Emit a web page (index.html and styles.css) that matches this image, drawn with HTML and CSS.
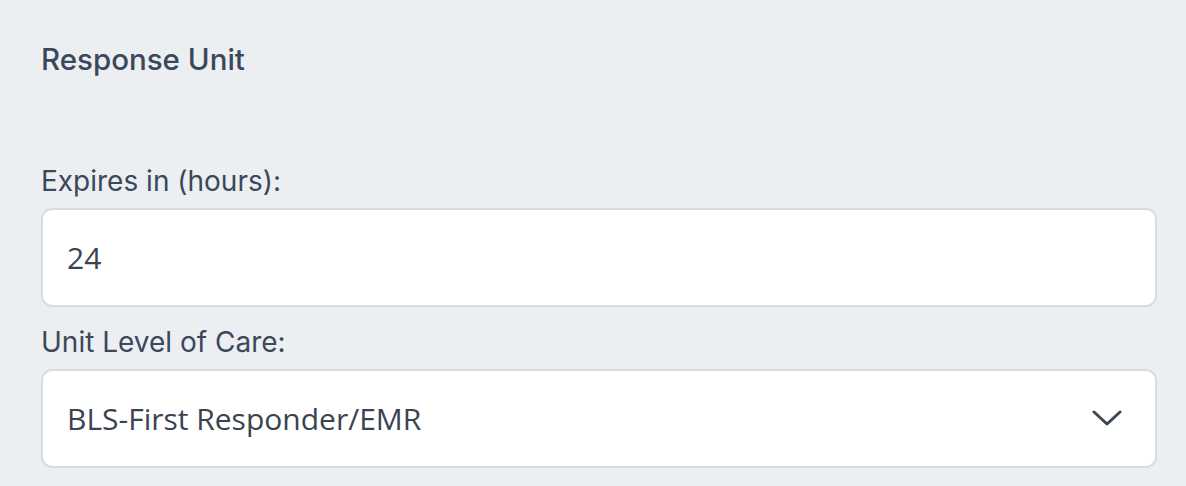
FILE: index.html
```html
<!DOCTYPE html>
<html lang="en">
<head>
  <meta charset="UTF-8" />
  <meta name="viewport" content="width=device-width, initial-scale=1.0" />
  <title>Response Unit</title>
  <link rel="stylesheet" href="styles.css">
</head>
<body>
  <div class="panel">
    <h2 class="title">Response Unit</h2>

    <div class="field">
      <label for="expires">Expires in (hours):</label>
      <input id="expires" class="control" type="text" value="24" />
    </div>

    <div class="field">
      <label for="level">Unit Level of Care:</label>
      <div class="select-wrap">
        <select id="level" class="control">
          <option>BLS-First Responder/EMR</option>
          <option>BLS-EMT</option>
          <option>ALS-Paramedic</option>
        </select>
        <svg class="chevron" width="30" height="16" viewBox="0 0 30 16" aria-hidden="true">
          <path d="M2 2 L15 14 L28 2" fill="none" stroke="#3b4656" stroke-width="3" stroke-linecap="round" stroke-linejoin="round"/>
        </svg>
      </div>
    </div>
  </div>
</body>
</html>
```

FILE: styles.css
```css
* {
  box-sizing: border-box;
}

body {
  margin: 0;
  background: #eceff2;
  font-family: Inter, 'Liberation Sans', sans-serif;
  color: #3b475a;
}

.panel {
  padding: 39px 29px 0 41px;
}

.title {
  margin: 0 0 84px;
  font-size: 29.5px;
  line-height: 40px;
  font-weight: 500;
}

.field label {
  display: block;
  font-size: 28px;
  line-height: 36px;
  margin-bottom: 9px;
}

.field + .field {
  margin-top: 17px;
}

.control {
  display: block;
  width: 100%;
  height: 99px;
  margin: 0;
  padding: 0 24px;
  border: 2px solid #d8dce1;
  border-radius: 11px;
  background: #fff;
  font-family: 'Open Sans', 'Noto Sans', sans-serif;
  font-size: 30px;
  color: #3a4351;
  outline: none;
}

select.control {
  appearance: none;
  -webkit-appearance: none;
}

.select-wrap {
  position: relative;
}

.chevron {
  position: absolute;
  right: 35px;
  top: 41px;
  pointer-events: none;
}
```
